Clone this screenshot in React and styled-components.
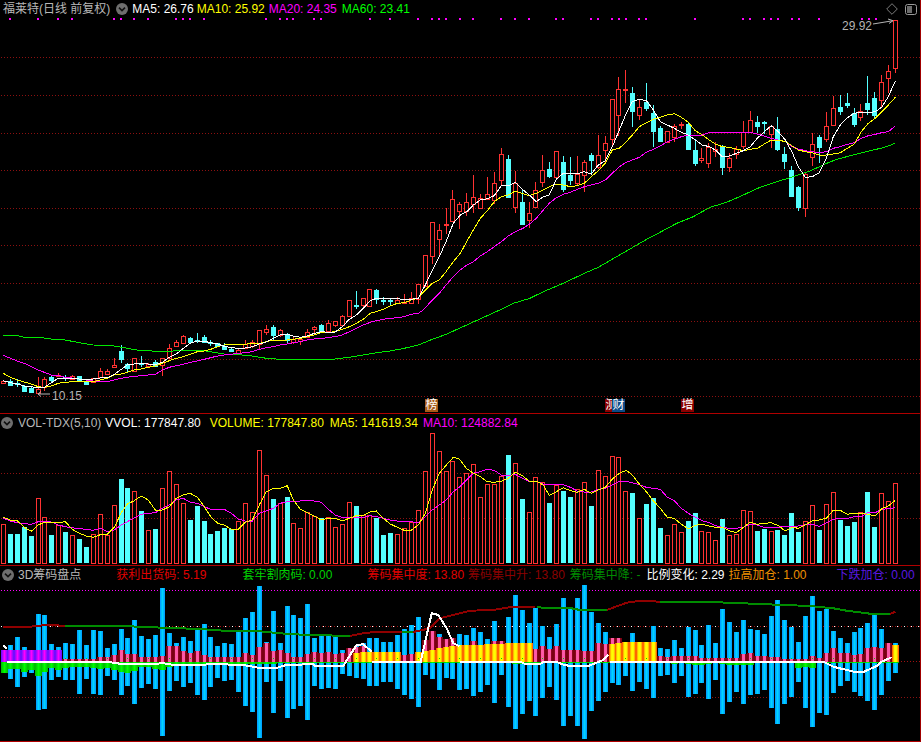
import React from "react";
import styled, { createGlobalStyle } from "styled-components";

const Global = createGlobalStyle`
  html, body { margin: 0; padding: 0; background: #000; }
`;

const Screen = styled.div`
  width: 921px;
  height: 742px;
  box-sizing: border-box;
  background: #000;
  border-right: 1px solid #a00000;
  display: flex;
  flex-direction: column;
  overflow: hidden;
  font-family: "Liberation Sans", "Noto Sans CJK SC", sans-serif;
`;

const Pane = styled.section`
  position: relative;
  height: ${(p) => p.$height}px;
  flex: none;
  box-sizing: border-box;
  border-bottom: 1px solid #b00000;
  display: flex;
  flex-direction: column;
`;

const PaneHeader = styled.header`
  height: ${(p) => p.$height || 17}px;
  flex: none;
  display: flex;
  align-items: center;
  padding-left: ${(p) => p.$pad || 2}px;
  font-size: 12px;
  line-height: 14px;
  white-space: nowrap;
`;

const Title = styled.span`
  color: #b8b8b8;
  margin-left: ${(p) => p.$ml || 0}px;
`;

const Legend = styled.span`
  color: ${(p) => p.$color};
  margin-left: ${(p) => p.$ml || 0}px;
  flex: none;
`;

const CollapseSlot = styled.span`
  display: flex;
  flex: none;
  margin-left: ${(p) => p.$ml || 0}px;
`;

const HeaderTools = styled.div`
  margin-left: auto;
  margin-right: 3px;
  display: flex;
  align-items: center;
  gap: 7px;
`;

const Chart = styled.svg`
  display: block;
  flex: none;
`;

const PriceLabel = styled.span`
  position: absolute;
  left: ${(p) => p.$x}px;
  top: ${(p) => p.$y}px;
  color: #b4b4b4;
  font-size: 12px;
  line-height: 14px;
`;

const Badge = styled.span`
  position: absolute;
  left: ${(p) => p.$x}px;
  top: 399px;
  width: 13px;
  height: 13px;
  background: ${(p) => p.$bg};
  color: #fff;
  font-size: 12px;
  line-height: 13px;
  text-align: center;
`;

/* ---------- data ---------- */
const barLeft = (i) => Math.round(1 + i * 6.915);
const CYAN = "#54ffff";
const RED = "#ff3232";

// [red?, high, bodyTop, bodyBottom, low] in zoomed units, grouped by crop offset
const candleA = [
  [1,302,302,310,312],[0,298,302,314,316],[0,298,308,312,320],[0,315,317,332,335],[0,322,323,336,339],
  [1,292,326,338,345],[1,290,298,320,332],[0,286,291,300,305],[1,280,286,289,292],[0,285,292,295,302],
  [1,284,289,296,298],[0,288,289,301,305],[0,303,305,311,314],[1,293,293,306,308],[1,265,273,290,292],
  [1,268,273,281,284],[1,235,256,262,264],[0,195,213,238,248],[0,250,253,265,276],[1,235,235,272,275],
  [0,228,248,251,262],[1,248,251,258,262],[0,240,245,258,260],[1,235,235,256,288],[1,193,203,233,238],
  [1,180,187,199,202],[1,165,168,188,192],[0,170,174,185,187],[0,158,181,184,190],[0,165,171,186,190],
  [0,180,185,187,198],[0,188,190,198,200],[0,190,197,207,208],[0,200,206,212,216],[1,205,211,219,224],
  [1,180,191,203,205],[1,180,186,198,205],[1,150,151,193,207],[1,135,147,155,165],[0,135,142,165,182],
  [1,148,149,165,172],[0,158,161,179,188],[1,172,177,186,192],[1,172,177,184,194],[1,148,156,172,175],
  [1,138,142,148,162],[0,133,135,152,155],[1,120,130,154,158],[1,122,124,135,140],[1,104,108,136,140],
  [1,60,61,107,108],[0,34,76,79,86],[1,54,55,75,80],[1,28,28,79,80],[0,27,30,58,72],
  [0,50,60,63,75],[0,54,60,63,75],[1,52,60,68,70],[1,43,66,70,72],[1,35,54,70,72],[1,12,12,56,72],
].map((c) => [c[0], ...c.slice(1).map((v) => 280 + v / 3)]);
const candleB = [
  [1,376,376,467,468],[1,277,277,377,402],[1,282,301,326,378],[1,234,283,285,312],[1,180,208,272,272],
  [1,215,223,242,296],[1,190,217,244,258],[1,136,202,222,248],[1,193,203,233,237],[1,141,193,207,210],
  [1,127,160,210,222],[1,55,73,151,165],[0,76,87,200,200],[1,124,160,232,248],[0,180,217,281,281],
  [1,217,250,269,293],[1,156,179,230,232],[1,76,121,155,172],[0,97,118,137,145],[1,62,64,140,148],
  [0,79,97,178,185],[0,82,136,150,165],[1,79,133,158,165],[1,90,97,134,185],[0,70,75,90,133],[1,15,75,112,118],
].map((c) => [c[0], ...c.slice(1).map((v) => 130 + v / 3)]);
const candleC = [
  [1,408,430,449,488],[1,298,298,418,440],[1,232,268,344,408],[1,210,268,269,310],[0,262,279,332,381],
  [1,298,322,344,360],[0,249,307,324,333],[0,315,340,392,441],[0,378,385,423,426],[1,394,394,426,426],
  [1,372,379,411,425],[1,367,373,375,388],[0,367,372,446,446],[0,416,450,488,498],[1,444,475,480,490],
  [1,430,441,488,503],[1,426,448,452,470],[0,435,441,500,525],[1,460,474,500,515],[1,438,448,461,478],
  [1,363,395,437,448],[1,333,361,395,400],[0,348,366,377,400],[0,363,366,369,402],[1,376,378,402,445],
  [0,351,387,447,452],[0,442,462,483,507],[0,498,510,588,588],[0,558,561,621,633],[1,516,523,623,651],
  [1,400,433,470,498],[0,405,411,440,489],[1,336,378,416,426],[1,288,325,374,376],[0,285,321,333,345],
  [0,280,310,315,324],[0,325,339,372,381],[1,312,332,350,363],[0,228,309,327,345],[0,276,294,344,357],
  [1,225,247,299,320],[1,195,214,233,278],[1,60,60,205,218],
].map((c) => [c[0], ...c.slice(1).map((v) => v / 3)]);
const candles = [...candleA, ...candleB, ...candleC];

const toPts = (flat, x0, y0) => {
  const out = [];
  for (let i = 0; i < flat.length; i += 2) out.push(`${(x0 + flat[i] / 3).toFixed(1)},${(y0 + flat[i + 1] / 3).toFixed(1)}`);
  return out;
};
const line = (...segs) => segs.flatMap(([f, x, y]) => toPts(f, x, y)).join(" ");

const ma5 = line(
  [[10,302,31,308,52,312,73,318,94,320,115,323,133,322,154,308,175,295,196,296,217,295,238,297,259,300,280,297,301,294,322,293,343,283,364,268,382,255,403,252,424,250,445,252,466,254,487,247,508,232,529,222,550,205,571,190,592,183,613,184,632,188,653,192,673,199,694,203,715,205,736,204,757,200,778,192,799,186,820,175,841,165,862,162,880,168,901,172,922,168,943,160,964,155,985,157,1006,156,1027,140,1048,118,1069,105,1090,85,1111,62,1129,55,1150,55,1171,55,1192,55,1213,60,1234,58,1255,55], 0, 280],
  [[355,505,376,465,397,420,418,380,438,335,460,280,481,255,500,245,520,225,541,210,562,206,583,197,604,167,625,167,646,157,667,178,688,195,709,215,730,200,748,195,769,148,790,130,811,130,832,132,853,125,874,132,895,105], 300, 130],
  [[436,482,457,440,478,390,499,340,517,305,538,298,559,302,580,330,601,365,622,375,643,385,664,397,685,405,706,420,727,435,748,440,766,450,787,470,808,468,829,460,850,452,871,440,892,415,913,395,934,377,955,395,976,420,997,458,1015,500,1036,532,1057,530,1078,518,1099,475,1120,410,1141,375,1162,353,1183,340,1204,337,1225,338,1246,335,1265,322,1285,290,1306,243], 460, 0]
);
const ma10 = line(
  [[10,280,31,292,52,300,73,306,94,312,115,320,133,322,154,318,175,310,196,307,217,305,238,305,259,305,280,305,301,300,322,295,343,285,364,282,382,277,403,270,424,267,445,262,466,258,487,250,508,242,529,235,550,230,571,223,592,215,613,213,632,208,653,200,673,195,694,193,715,193,736,193,757,190,778,190,799,185,820,180,841,182,862,180,880,178,901,175,922,170,943,165,964,157,985,157,1006,155,1027,148,1048,140,1069,130,1090,118,1111,100,1129,95,1150,88,1171,78,1192,70,1213,68,1234,60,1255,55], 0, 280],
  [[355,503,376,480,397,460,418,450,438,425,460,395,481,370,500,335,520,300,541,265,562,242,583,215,604,200,625,195,646,183,667,190,688,197,709,190,730,180,748,170,769,163,790,165,811,170,832,167,853,160,874,140,895,122], 300, 130],
  [[436,490,457,450,478,445,499,425,517,405,538,380,559,368,580,358,601,352,622,345,643,341,664,352,685,367,706,392,727,405,748,420,766,432,787,440,808,442,829,447,850,452,871,448,892,445,913,432,934,420,955,420,976,425,997,438,1015,450,1036,455,1057,458,1078,465,1099,465,1120,462,1141,458,1162,445,1183,432,1204,395,1225,370,1246,355,1265,335,1285,315,1306,292], 460, 0]
);
const ma20 = line(
  [[10,226,31,235,52,243,73,250,94,260,115,270,133,277,154,285,175,287,196,292,217,294,238,297,259,300,280,303,301,305,322,305,343,300,364,295,382,292,403,289,424,287,445,285,466,283,487,270,508,262,529,257,550,253,571,247,592,243,613,238,632,233,653,228,673,225,694,223,715,220,736,218,757,215,778,208,799,203,820,200,841,195,862,192,880,188,901,185,922,180,943,177,964,176,985,172,1006,170,1027,165,1048,155,1069,145,1090,135,1111,127,1129,122,1150,118,1171,115,1192,113,1213,110,1234,103,1255,100], 0, 280],
  [[370,540,397,510,418,490,438,465,460,440,481,420,500,405,520,395,541,378,562,365,583,350,604,335,625,318,646,305,667,296,688,283,709,265,730,240,748,220,769,203,790,193,811,187,832,178,853,170,874,165,895,160], 300, 130],
  [[436,540,457,520,478,500,499,487,517,480,538,472,559,457,580,448,601,438,622,425,643,418,664,410,685,405,706,408,727,405,748,398,766,397,787,397,808,397,829,397,850,397,871,397,892,402,913,408,934,415,955,420,976,425,997,440,1015,447,1036,452,1057,455,1078,458,1099,455,1120,445,1141,440,1162,433,1183,428,1204,415,1225,407,1246,403,1265,398,1285,395,1306,378], 460, 0]
);
const ma60 = line(
  [[10,167,52,167,73,172,115,172,154,177,196,180,238,188,280,195,343,198,382,205,424,212,487,214,550,212,613,212,673,222,715,224,757,228,799,235,841,238,901,238,997,238,1048,232,1090,225,1129,218,1171,213,1213,205,1255,195,1297,178,1339,163,1378,145], 0, 280],
  [[540,567,604,538,640,520,690,505,730,485,790,460,853,430,895,412], 300, 130],
  [[560,718,600,697,650,670,700,650,750,622,800,607,850,585,900,562,950,545,1000,530,1050,513,1100,490,1130,478,1180,465,1230,452,1270,443,1306,430], 460, 0]
);

const dotsA = [30,114,174,216,342,363,402,444,528,549,570,612,798,840,861,879,942,963,1110,1170,1254,1296,1317,1338,1380];
const dotsB = [39,123,165,207,288,309,393,414,456,477,498,537,558,705,849,870,912,933,954,996,1017,1077,1206,1227,1248];
const pinkDots = [...dotsA.map((x) => x / 3), ...dotsB.map((x) => 460 + x / 3)];

const priceGrid = [57, 95, 133, 170, 208, 245, 283, 321, 359, 396];

const volTops = [
  343,372,372,351,378,265,322,375,345,366,376,387,411,373,313,376,286,207,234,244,303,361,357,235,184,223,280,330,288,333,372,363,354,357,334,280,306,121,196,267,280,261,340,355,307,318,325,322,351,343,277,288,316,316,324,375,369,373,355,336,301,184,70,124,184,154,
  202,190,163,262,223,223,199,135,160,267,307,202,217,279,224,243,261,238,217,288,181,199,139,142,244,249,325,282,264,354,376,343,367,333,309,364,367,391,327,376,373,301,304,363,357,364,360,375,309,366,334,286,360,283,247,330,348,336,307,246,351,250,274,220,
];
const volCyan = new Set([1,2,3,4,7,9,11,12,17,18,20,22,27,28,29,30,31,32,33,39,41,46,51,54,55,56,73,75,79,81,82,85,91,93,94,95,99,100,104,109,110,112,113,114,115,118,121,122,123,125,126]);

const volYellow = line(
  [[10,322,31,330,52,332,73,352,94,364,115,345,133,337,154,338,175,338,196,335,217,358,238,370,259,378,280,382,301,374,322,373,343,352,364,308,382,282,403,272,424,258,445,270,466,300,487,300,508,290,529,265,550,254,571,250,592,262,613,290,632,320,653,340,673,345,694,358,715,358,736,337,757,330,778,285,799,245,820,235,841,235,862,227,880,270,901,298,922,308,943,318,964,330,985,325,1006,325,1027,333,1048,325,1069,317,1090,316,1111,306,1129,303,1150,325,1171,342,1192,352,1213,361,1234,361,1255,345,1276,310,1297,240,1318,190,1339,165,1360,142,1378,147], 0, 410],
  [[19,175,40,190,61,200,82,215,103,217,124,214,145,205,166,187,187,197,208,213,229,213,250,225,268,256,289,245,310,233,331,242,352,247,373,238,394,250,415,240,436,232,457,207,478,190,499,181,517,195,538,222,559,245,580,272,601,295,622,322,643,325,664,343,685,356,706,346,727,343,748,348,766,352,787,352,808,362,829,368,850,352,871,337,892,343,913,340,934,338,955,347,976,363,997,352,1015,355,1036,345,1057,332,1078,330,1099,325,1120,301,1141,301,1162,313,1183,310,1204,310,1225,313,1246,318,1265,296,1285,288,1306,271], 460, 410]
);
const volMagenta = line(
  [[10,325,31,333,52,338,73,341,94,343,115,335,133,335,154,336,175,345,196,350,217,353,238,356,259,358,280,361,301,355,322,365,343,360,364,345,382,335,403,323,424,313,445,310,466,308,487,295,508,285,529,270,550,265,571,277,592,280,613,290,632,298,653,298,673,298,694,310,715,327,736,333,757,333,778,310,799,303,820,295,841,280,862,275,880,275,901,273,922,271,943,273,964,277,985,298,1006,315,1027,322,1048,322,1069,322,1090,322,1111,317,1129,320,1150,325,1171,330,1192,333,1213,335,1234,335,1255,338,1276,320,1297,300,1318,285,1339,270,1360,245,1378,232], 0, 410],
  [[19,210,40,190,61,185,82,178,103,181,124,195,145,197,166,193,187,205,208,214,229,214,250,222,268,223,289,224,310,224,331,232,352,243,373,246,394,246,415,238,436,235,457,225,478,214,499,214,517,218,538,224,559,232,580,235,601,238,622,262,643,272,664,295,685,310,706,322,727,332,748,338,766,347,787,352,808,355,829,355,850,352,871,343,892,345,913,352,934,352,955,352,976,349,997,349,1015,348,1036,344,1057,343,1078,349,1099,338,1120,328,1141,325,1162,325,1183,320,1204,320,1225,307,1246,308,1265,298,1285,296,1306,293], 460, 410]
);

const blue = [
  null,[255,357],[231,381],[261,351],[270,339],[162,450],[165,447],[252,360],[261,351],[249,360],
  [252,360],[210,402],[255,357],[210,402],[213,405],[264,348],[252,360],[207,405],[234,378],[180,432],
  [228,384],[237,372],[225,387],[84,528],[219,393],[249,363],[231,381],[243,369],[210,405],[192,420],
  [231,381],[258,354],[249,363],[252,360],[214,396],[174,438],[156,456],[78,534],[246,366],[153,459],
  [249,363],[138,474],[165,447],[174,438],[132,480],[234,378],[228,387],[225,384],[228,387],[270,342],
  [264,348],[258,354],[249,357],[234,378],[234,378],[246,366],[246,366],[225,387],[207,405],[195,417],
  [171,441],[240,345],[214,357],[222,390],[240,354],[234,357],[222,390],[225,387],[204,408],[216,396],
  [237,375],[183,429],[246,345],[171,441],[105,507],[150,462],[189,423],[144,468],[198,414],[231,381],
  [192,420],[114,498],[147,468],[114,498],[75,537],[156,453],[189,423],[216,396],[240,369],[240,375],
  [246,348],[219,393],[246,366],[246,387],[198,414],[264,348],[267,345],[240,369],[264,348],[201,411],
  [210,402],[255,369],[195,417],[249,360],[147,462],[186,426],[216,396],[180,432],[207,405],[210,402],
  [222,390],[168,444],[120,492],[180,432],[201,411],[246,366],[168,444],[108,501],[153,459],[147,465],
  [213,399],[234,378],[249,363],[216,396],[204,408],[189,423],[165,450],[207,405],[249,363],[250,338],
];

const pinkTop = [
  0,0,0,0,0,0,0,0,0,298,298,298,298,298,292,292,285,270,282,282,290,292,292,288,258,258,274,280,274,285,
  292,292,292,292,292,280,285,262,250,274,270,280,292,290,282,276,280,276,282,280,264,262,258,276,276,276,276,276,285,282,
  276,240,213,232,238,234,255,255,243,255,252,243,243,249,249,249,249,268,258,268,258,270,270,270,273,273,250,252,234,234,
  246,246,246,246,246,288,292,288,288,288,288,294,294,294,294,294,294,282,280,288,288,292,292,296,296,298,298,288,294,280,
  264,280,280,285,282,264,262,264,250,255,
];
const yellowTop = {51:278,52:276,53:276,54:276,55:276,56:276,57:276,60:276,61:274,62:270,63:264,64:262,65:258,66:255,67:255,68:255,69:255,70:252,71:252,72:252,73:249,74:249,75:249,76:249,88:252,89:249,90:246,91:246,92:246,93:246,94:246,129:255};
const greenBottom = [
  338,327,327,335,330,348,335,323,330,323,322,320,320,323,328,323,330,335,338,333,322,322,328,330,322,318,316,316,314,314,
  313,313,312,312,312,312,311,311,311,311,310,310,310,310,310,310,310,310,310,310,309,309,309,309,309,309,309,309,309,309,
  308,308,308,308,308,308,308,308,309,309,309,309,309,309,312,312,312,308,308,308,308,308,308,308,308,308,308,308,308,308,
  308,308,308,308,309,309,309,312,309,312,314,316,312,310,312,314,314,314,314,309,309,309,309,309,309,325,322,325,310,310,
  310,310,310,310,310,308,308,308,308,308,
];

const zy = (v) => 560 + v / 3;
const whiteSegs = [
  line([[10,255,20,268], 0, 560]),
  line([[20,305,320,305,365,312,445,312,490,310,530,316,570,316,650,312,735,316,780,324,830,324,855,316,940,312,945,318,1030,318,1050,285,1070,255,1090,253,1115,275], 0, 560]),
  line([[1115,305,1240,305,1262,305,1270,270,1295,160,1315,165,1340,205,1360,250,1378,258], 0, 560]),
  line([[180,305,195,312,240,312,250,306,290,306,310,314,335,319,385,318,430,300,445,285], 460, 560]),
  line([[450,305,1090,305,1120,320,1160,330,1185,336,1210,336,1250,318,1265,305,1295,292], 460, 560]),
  line([[0,305,180,305], 460, 560]),
];
const redSegs = [
  line([[10,200,90,200,130,196,150,194,195,198], 0, 560]),
  line([[1050,228,1090,220,1130,215,1240,216,1290,205,1320,175,1380,160], 0, 560]),
  line([[0,160,30,152,100,150,160,140,225,142], 460, 560]),
  line([[440,150,500,128,540,122,600,125], 460, 560]),
  line([[1290,162,1306,155], 460, 560]),
];
const greenSegs = [
  line([[195,198,380,198,410,200,490,203,545,205,612,208,670,212,780,214,840,220,905,224,1050,228], 0, 560]),
  line([[1205,216,1240,216], 0, 560]),
  line([[230,140,250,144,330,144,360,150,440,150], 460, 560]),
  line([[600,126,750,126,850,130,950,134,1050,138,1120,145,1160,152,1230,161,1290,162], 460, 560]),
];

/* ---------- drawings ---------- */
const Collapse = () => (
  <svg width="12" height="12" viewBox="0 0 12 12">
    <circle cx="6" cy="6" r="6" fill="#6e6e6e" />
    <path d="M3 4.6 L6 7.6 L9 4.6" fill="none" stroke="#111" strokeWidth="1.6" />
  </svg>
);

const Dotted = ({ y, color = "#8c1010", gap = 2, x2 = 920 }) => (
  <line x1="1" x2={x2} y1={y + 0.5} y2={y + 0.5} stroke={color} strokeDasharray={`1 ${gap}`} />
);

const PriceChart = () => (
  <Chart width="920" height="395" viewBox="0 18 920 395" shapeRendering="crispEdges">
    {priceGrid.map((y) => <Dotted key={y} y={y} />)}
    {pinkDots.map((x, i) => <rect key={i} x={Math.round(x) - 1} y="18" width="2" height="2" fill="#ff00ff" />)}
    {candles.map(([r, hi, top, bot, lo], i) => {
      const l = barLeft(i);
      const t = Math.round(top);
      const h = Math.max(1, Math.round(bot) - t);
      return (
        <g key={i}>
          <line x1={l + 2.5} x2={l + 2.5} y1={hi} y2={lo} stroke={r ? RED : CYAN} />
          {r ? (
            <rect x={l + 0.5} y={t + 0.5} width="4" height={h} fill="#000" stroke={RED} />
          ) : (
            <rect x={l} y={t} width="5" height={h + 1} fill={CYAN} />
          )}
        </g>
      );
    })}
    <polyline points={ma60} fill="none" stroke="#00e800" />
    <polyline points={ma20} fill="none" stroke="#ff00ff" />
    <polyline points={ma10} fill="none" stroke="#ffff00" />
    <polyline points={ma5} fill="none" stroke="#ffffff" />
    <g stroke="#b4b4b4" fill="none" shapeRendering="auto">
      <path d="M873 24 L893 20.7 M888 19 L893 20.7 L889 23.5" />
      <path d="M38 394 H50 M41 391.5 L38 394 L41 396.5" />
    </g>
  </Chart>
);

const VolumeChart = () => (
  <Chart width="920" height="134" viewBox="0 431 920 134" shapeRendering="crispEdges">
    <Dotted y={473} />
    <Dotted y={518} />
    {volTops.map((z, i) => {
      const l = barLeft(i);
      const t = Math.round(410 + z / 3);
      return volCyan.has(i) ? (
        <rect key={i} x={l} y={t} width="5" height={563 - t} fill={CYAN} />
      ) : (
        <rect key={i} x={l + 0.5} y={t + 0.5} width="4" height={563 - t} fill="#000" stroke={RED} />
      );
    })}
    <polyline points={volMagenta} fill="none" stroke="#ff00ff" />
    <polyline points={volYellow} fill="none" stroke="#ffff00" />
  </Chart>
);

const Gradient = ({ id, stops }) => (
  <linearGradient id={id} x1="0" x2="1" y1="0" y2="0">
    {stops.map(([o, c]) => <stop key={o} offset={o} stopColor={c} />)}
  </linearGradient>
);

const ChipChart = () => (
  <Chart width="920" height="158" viewBox="0 583 920 158">
    <defs>
      <Gradient id="gBlue" stops={[[0, "#0096ff"], [0.5, "#00d4ff"], [1, "#0096ff"]]} />
      <Gradient id="gPurple" stops={[[0, "#5a10ff"], [0.5, "#ff00ff"], [1, "#5a10ff"]]} />
      <Gradient id="gGreen" stops={[[0, "#00b800"], [0.5, "#00ff00"], [1, "#00b800"]]} />
      <Gradient id="gPink" stops={[[0, "#7a0010"], [0.2, "#7a0010"], [0.36, "#ff5aa8"], [0.64, "#ff5aa8"], [0.8, "#7a0010"], [1, "#7a0010"]]} />
      <Gradient id="gYellow" stops={[[0, "#ff3c00"], [0.28, "#ffe000"], [0.4, "#ffff00"], [0.6, "#ffff00"], [0.72, "#ffe000"], [1, "#ff3c00"]]} />
    </defs>
    <g shapeRendering="crispEdges">
      <Dotted y={590} color="#ff00ff" />
      <Dotted y={626} color="#a01010" />
      <Dotted y={626} color="#ffffff" gap={6} />
      <Dotted y={661} color="#a01010" />
      <Dotted y={697} color="#8c1010" />
      {blue.map((b, i) => b && (
        <rect key={i} x={barLeft(i)} y={zy(b[0])} width="5" height={(b[1] - b[0]) / 3} fill="url(#gBlue)" />
      ))}
      {pinkTop.map((t, i) => t > 0 && (
        <rect key={i} x={barLeft(i) - 1} y={zy(t)} width="7" height={(305 - t) / 3} fill="url(#gPink)" />
      ))}
      {Object.entries(yellowTop).map(([i, t]) => (
        <rect key={i} x={barLeft(+i) - 1} y={zy(t)} width="7" height={(305 - t) / 3} fill="url(#gYellow)" />
      ))}
      {Array.from({ length: 9 }, (_, i) => (
        <rect key={i} x={Math.max(1, barLeft(i) - 1)} y={zy(270)} width="7" height="12" fill="url(#gPurple)" />
      ))}
      {greenBottom.map((b, i) => (
        <rect key={i} x={Math.max(1, barLeft(i) - 1)} y={zy(306)} width="7" height={(b - 306) / 3} fill="url(#gGreen)" />
      ))}
      {pinkTop.map((t, i) => i % 3 === 0 && t > 0 && i < 129 && (
        <rect key={i} x={barLeft(i) + 2} y={658} width="1" height="1" fill="#00e000" />
      ))}
    </g>
    <g fill="none" strokeWidth="2" shapeRendering="crispEdges">
      {redSegs.map((p, i) => <polyline key={i} points={p} stroke="#900000" />)}
      {greenSegs.map((p, i) => <polyline key={i} points={p} stroke="#008c00" />)}
      {whiteSegs.map((p, i) => <polyline key={i} points={p} stroke="#ffffff" />)}
    </g>
  </Chart>
);

const Tools = () => (
  <HeaderTools>
    <svg width="12" height="12" viewBox="0 0 12 12">
      <path d="M6 .7 L11.3 6 L6 11.3 L.7 6 Z" fill="none" stroke="#7c7c7c" />
    </svg>
    <svg width="12" height="11" viewBox="0 0 12 11">
      <rect x=".5" y=".5" width="11" height="10" rx="2" fill="none" stroke="#9a9a9a" />
      <rect x="2" y="2" width="5" height="7" fill="#6c6c6c" />
    </svg>
  </HeaderTools>
);

export default function App() {
  return (
    <Screen>
      <Global />
      <Pane $height={414}>
        <PaneHeader $height={18} $pad={3}>
          <Title>福莱特(日线 前复权)</Title>
          <CollapseSlot $ml={6}><Collapse /></CollapseSlot>
          <Legend $color="#ffffff" $ml={4}>MA5: 26.76</Legend>
          <Legend $color="#ffff00" $ml={3}>MA10: 25.92</Legend>
          <Legend $color="#ff00ff" $ml={4}>MA20: 24.35</Legend>
          <Legend $color="#00ff00" $ml={5}>MA60: 23.41</Legend>
          <Tools />
        </PaneHeader>
        <PriceChart />
        <PriceLabel $x={842} $y={19}>29.92</PriceLabel>
        <PriceLabel $x={52} $y={389}>10.15</PriceLabel>
        <Badge $x={425} $bg="#a65a18">榜</Badge>
        <Badge $x={605} $bg="#8a0000">测</Badge>
        <Badge $x={612} $bg="#0c4a86">财</Badge>
        <Badge $x={681} $bg="#8a0000">增</Badge>
      </Pane>
      <Pane $height={152}>
        <PaneHeader $pad={1}>
          <Collapse />
          <Title $ml={5}>VOL-TDX(5,10)</Title>
          <Legend $color="#ffffff" $ml={4}>VVOL: 177847.80</Legend>
          <Legend $color="#ffff00" $ml={9}>VOLUME: 177847.80</Legend>
          <Legend $color="#ffff00" $ml={6}>MA5: 141619.34</Legend>
          <Legend $color="#ff00ff" $ml={5}>MA10: 124882.84</Legend>
        </PaneHeader>
        <VolumeChart />
      </Pane>
      <Pane $height={176}>
        <PaneHeader $pad={2}>
          <Collapse />
          <Title $ml={4}>3D筹码盘点</Title>
          <Legend $color="#e00000" $ml={35}>获利出货码: 5.19</Legend>
          <Legend $color="#00d000" $ml={36}>套牢割肉码: 0.00</Legend>
          <Legend $color="#e00000" $ml={35}>筹码集中度: 13.80</Legend>
          <Legend $color="#8c0000" $ml={4}>筹码集中升: 13.80</Legend>
          <Legend $color="#008c00" $ml={5}>筹码集中降: -</Legend>
          <Legend $color="#ffffff" $ml={6}>比例变化: 2.29</Legend>
          <Legend $color="#f09000" $ml={4}>拉高加仓: 1.00</Legend>
          <Legend $color="#5a18e0" $ml={30}>下跌加仓: 0.00</Legend>
        </PaneHeader>
        <ChipChart />
      </Pane>
    </Screen>
  );
}
